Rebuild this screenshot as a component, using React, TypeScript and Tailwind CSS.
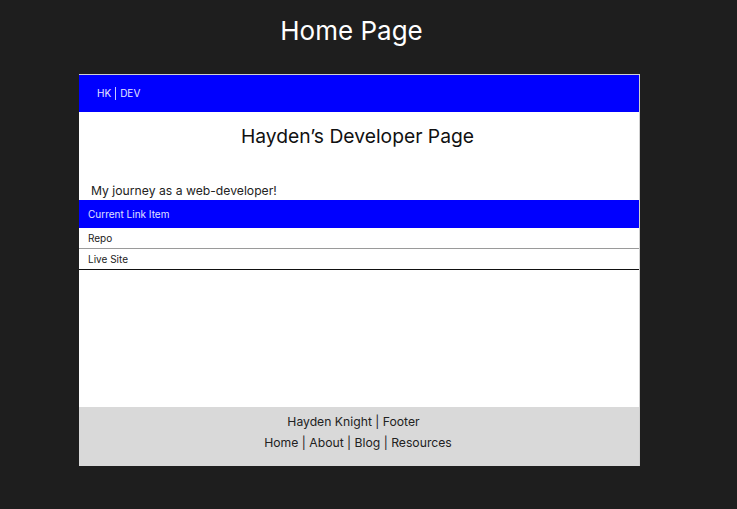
export default function App() {
  return (
    <div className="h-[509px] w-[737px] bg-[#1e1e1e] font-['Inter','Noto_Sans',sans-serif]">
      <div className="flex h-[74px] items-start justify-center pr-[34px] pt-[15px]">
        <h1 className="text-[26px] leading-[32px] text-white">Home Page</h1>
      </div>

      <div className="ml-[79px] flex h-[392px] w-[561px] flex-col border-r border-t border-[#cfcfcf] bg-white">
        <nav className="flex h-[37px] items-center bg-[#0000ff] px-[18px] text-[10px] text-[#e6e6ff]">
          HK <span className="mx-[4px] h-[13px] w-px bg-[#c8c8ff]" /> DEV
        </nav>

        <h2 className="pt-[11px] pr-[3px] text-center text-[19.3px] leading-[26px] text-[#111]">
          Hayden’s Developer Page
        </h2>
        <p className="mt-[33px] px-[12px] text-[12.2px] leading-[18px] text-[#222]">
          My journey as a web-developer!
        </p>

        <ul className="text-[10px]">
          <li className="flex h-[28px] items-center bg-[#0000ff] px-[9px] text-[#e0e0ff]">
            Current Link Item
          </li>
          <li className="flex h-[21px] items-center border-b border-[#9a9a9a] px-[9px] text-[#222]">
            Repo
          </li>
          <li className="flex h-[21px] items-center border-b border-[#111] px-[9px] text-[#222]">
            Live Site
          </li>
        </ul>

        <div className="flex-1" />

        <footer className="flex h-[59px] flex-col items-center bg-[#d9d9d9] pt-[4px] text-[12.2px] leading-[21px] text-[#222]">
          <div className="pr-[11px]">Hayden Knight | Footer</div>
          <div className="pr-[2px]">Home | About | Blog | Resources</div>
        </footer>
      </div>
    </div>
  )
}
